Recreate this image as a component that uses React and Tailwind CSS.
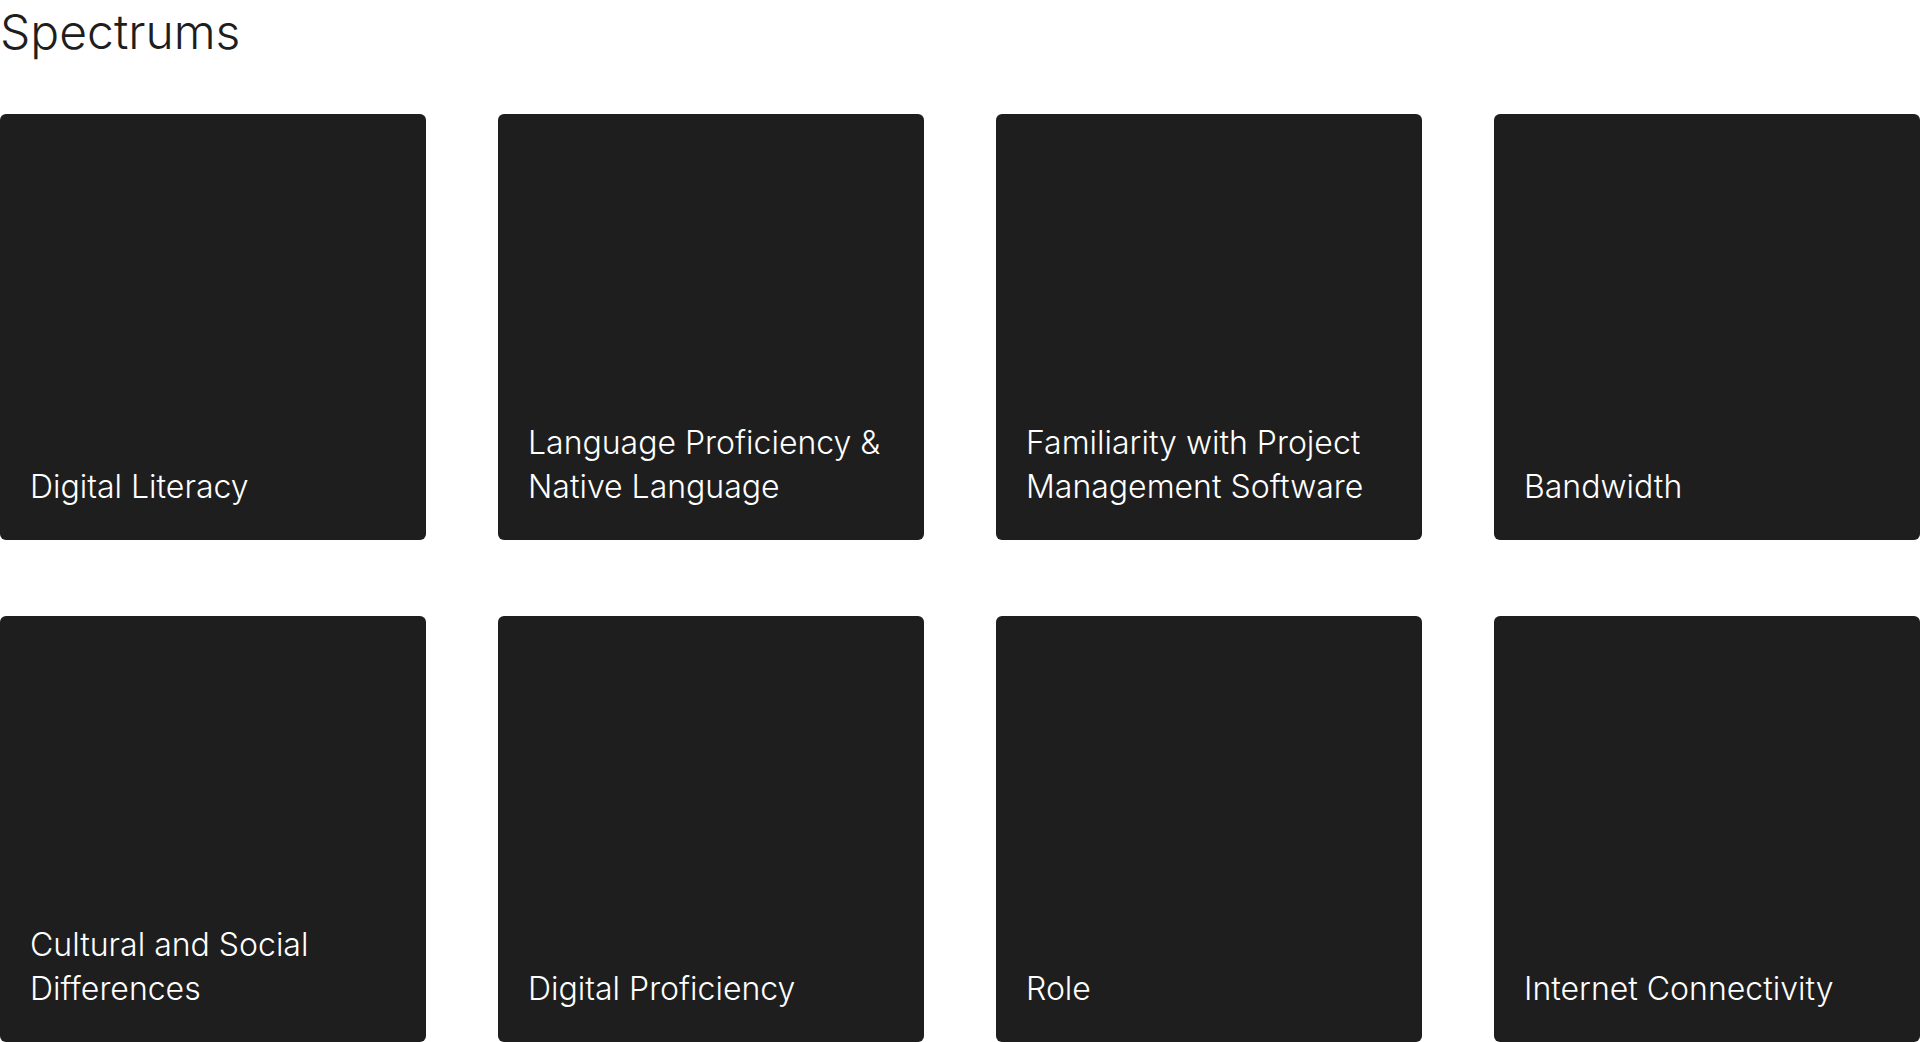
import React from "react";

const spectrums = [
  "Digital Literacy",
  "Language Proficiency & Native Language",
  "Familiarity with Project Management Software",
  "Bandwidth",
  "Cultural and Social Differences",
  "Digital Proficiency",
  "Role",
  "Internet Connectivity",
];

const SpectrumCard = ({ title }) => {
  return (
    <div className="aspect-square bg-[#1e1e1e] rounded-md flex flex-col justify-end pl-[30px] pr-8 pb-[31px]">
      <p className="text-white text-[32px] font-light leading-[44px]">{title}</p>
    </div>
  );
};

const App = () => {
  return (
    <div className="bg-white min-h-screen font-['Inter',sans-serif]">
      <h1 className="text-[48px] font-light leading-[64px] text-[#1e1e1e] mb-[50px]">
        Spectrums
      </h1>

      {/* Spectrum grid */}
      <div className="grid grid-cols-4 gap-x-[72px] gap-y-[76px]">
        {spectrums.map((item) => (
          <SpectrumCard key={item} title={item} />
        ))}
      </div>
    </div>
  );
};

export default App;
